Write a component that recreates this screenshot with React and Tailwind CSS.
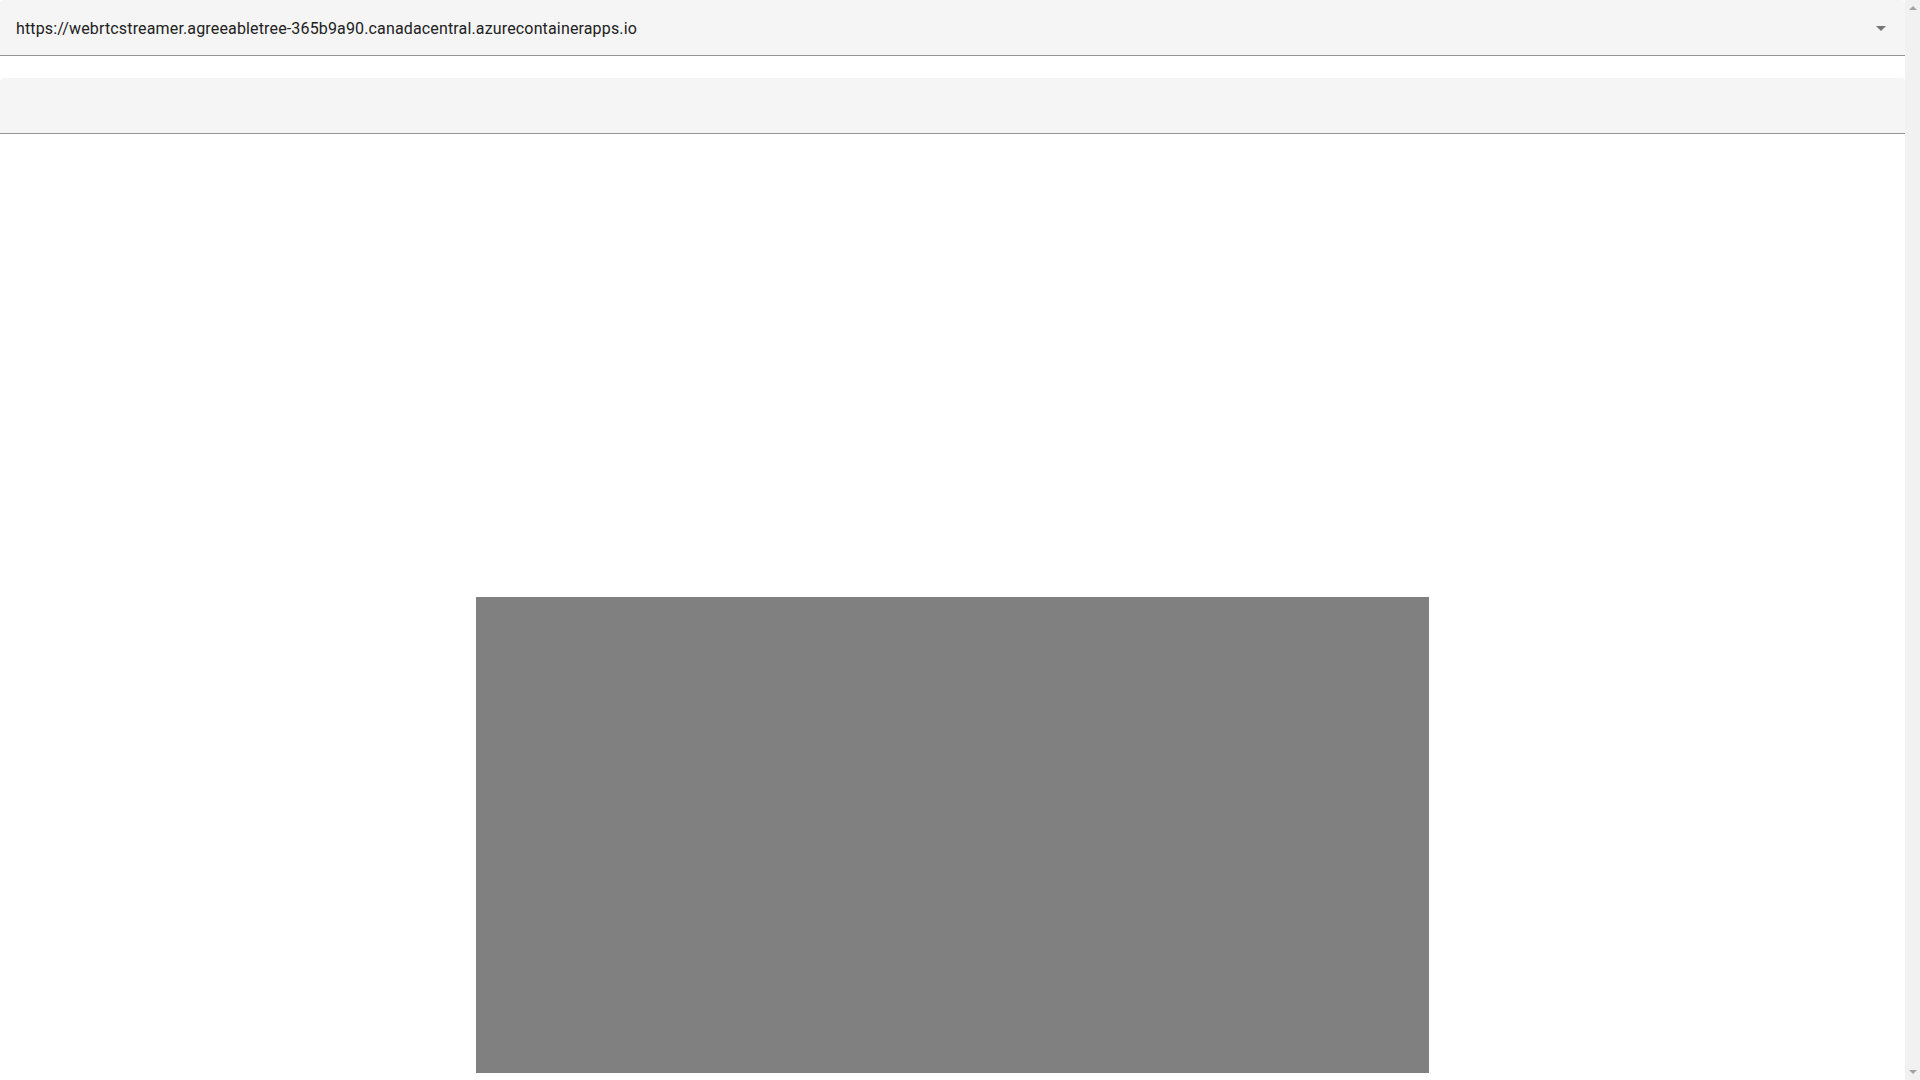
import { useState } from "react";

const streams = [
  "https://webrtcstreamer.agreeabletree-365b9a90.canadacentral.azurecontainerapps.io",
];

const ArrowDropDown = () => (
  <svg viewBox="0 0 24 24" className="w-6 h-6 fill-[#757575]">
    <path d="M7 10l5 5 5-5z" />
  </svg>
);

// fake browser scrollbar on the right edge
const ScrollBar = () => (
  <div className="w-[15px] h-full bg-[#f1f1f1] flex flex-col justify-between items-center py-[6px]">
    <svg viewBox="0 0 8 4" className="w-[8px] h-[4px] fill-[#a3a3a3]">
      <path d="M0 4L4 0L8 4z" />
    </svg>
    <svg viewBox="0 0 8 4" className="w-[8px] h-[4px] fill-[#a3a3a3]">
      <path d="M0 0L8 0L4 4z" />
    </svg>
  </div>
);

const App = () => {
  const [url] = useState(streams[0]);

  return (
    <div className="h-screen flex bg-white font-['Roboto',sans-serif] text-[#212121] overflow-hidden">
      <div className="flex-1 overflow-hidden">
        {/* stream selector */}
        <div className="relative h-[56px] bg-[#f5f5f5] rounded-t border-b border-[#949494] flex items-center pl-4 pr-8">
          <span className="text-base leading-6 tracking-[0.15px] pt-[2px]">{url}</span>
          <div className="absolute right-[12px] top-[16px]">
            <ArrowDropDown />
          </div>
        </div>

        {/* options field */}
        <div className="mt-[22px] h-[56px] bg-[#f5f5f5] rounded-t border-b border-[#949494]"></div>

        {/* video */}
        <div className="flex justify-center mt-[463px]">
          <div className="w-[953px] h-[476px] bg-[#808080]"></div>
        </div>
      </div>
      <ScrollBar />
    </div>
  );
};

export default App;
